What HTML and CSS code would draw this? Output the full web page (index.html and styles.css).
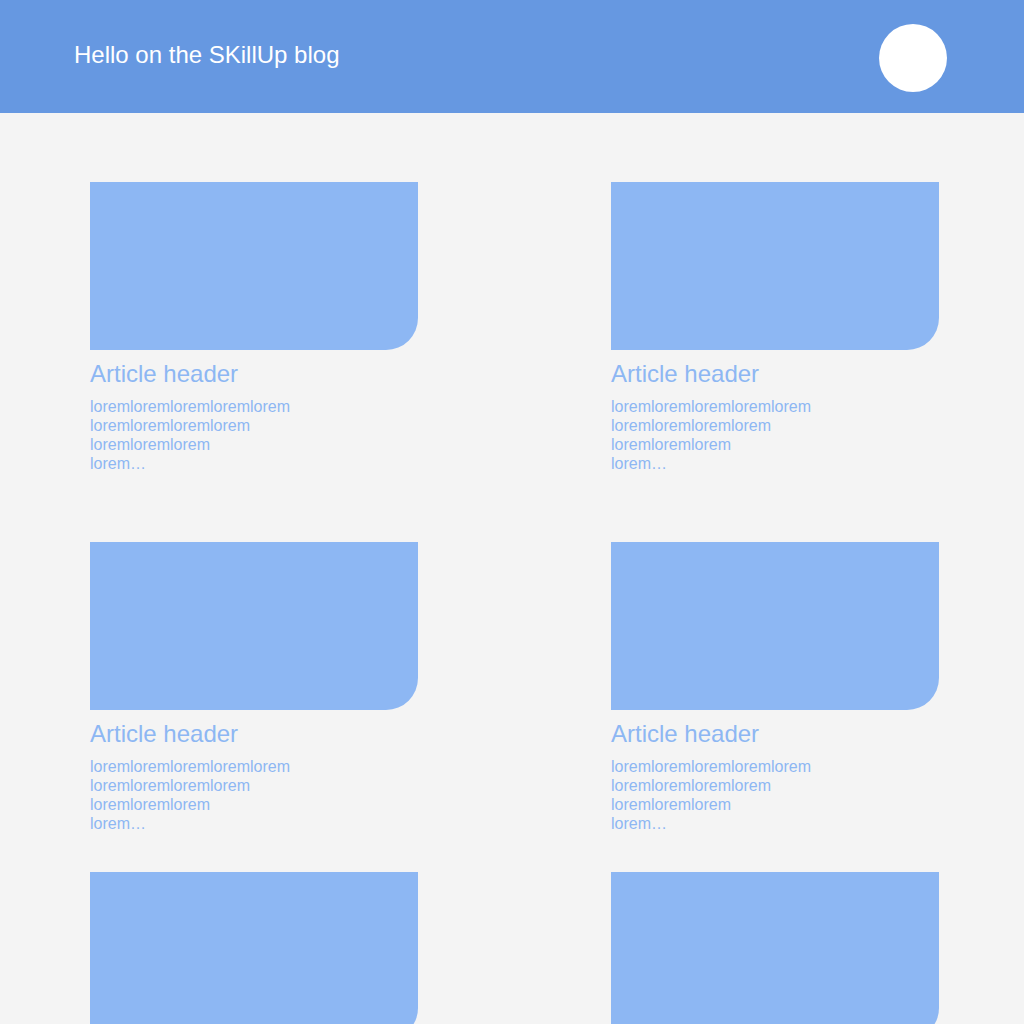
FILE: index.html
```html
<!DOCTYPE html>
<html lang="en">
<head>
<meta charset="utf-8">
<title>SKillUp blog</title>
<link rel="stylesheet" href="styles.css">
</head>
<body>
<header class="topbar">
  <h1 class="topbar-title">Hello on the SKillUp blog</h1>
  <div class="avatar"></div>
</header>
<main class="articles">
  <article class="card card-first">
    <div class="card-image"></div>
    <h2 class="card-title">Article header</h2>
    <p class="card-text">loremloremloremloremlorem<br>loremloremloremlorem<br>loremloremlorem<br>lorem…</p>
  </article>
  <article class="card card-first">
    <div class="card-image"></div>
    <h2 class="card-title">Article header</h2>
    <p class="card-text">loremloremloremloremlorem<br>loremloremloremlorem<br>loremloremlorem<br>lorem…</p>
  </article>
  <article class="card">
    <div class="card-image"></div>
    <h2 class="card-title">Article header</h2>
    <p class="card-text">loremloremloremloremlorem<br>loremloremloremlorem<br>loremloremlorem<br>lorem…</p>
  </article>
  <article class="card">
    <div class="card-image"></div>
    <h2 class="card-title">Article header</h2>
    <p class="card-text">loremloremloremloremlorem<br>loremloremloremlorem<br>loremloremlorem<br>lorem…</p>
  </article>
  <article class="card">
    <div class="card-image"></div>
    <h2 class="card-title">Article header</h2>
    <p class="card-text">loremloremloremloremlorem<br>loremloremloremlorem<br>loremloremlorem<br>lorem…</p>
  </article>
  <article class="card">
    <div class="card-image"></div>
    <h2 class="card-title">Article header</h2>
    <p class="card-text">loremloremloremloremlorem<br>loremloremloremlorem<br>loremloremlorem<br>lorem…</p>
  </article>
</main>
</body>
</html>
```
FILE: styles.css
```css
* {
  box-sizing: border-box;
}

html, body {
  margin: 0;
  padding: 0;
}

body {
  background: #f4f4f4;
  font-family: "Liberation Sans", Arial, sans-serif;
  overflow: hidden;
}

.topbar {
  height: 113px;
  background: #6698e1;
  display: flex;
  align-items: center;
  justify-content: space-between;
  padding: 4px 77px 0 74px;
}

.topbar-title {
  margin: 0 0 8px 0;
  font-size: 24px;
  font-weight: normal;
  line-height: 28px;
  color: #ffffff;
}

.avatar {
  width: 68px;
  height: 68px;
  margin-bottom: 2px;
  border-radius: 50%;
  background: #ffffff;
}

.articles {
  display: grid;
  grid-template-columns: 328px 328px;
  justify-content: space-between;
  row-gap: 39px;
  padding: 69px 85px 0 90px;
}

.card-first {
  padding-bottom: 30px;
}

.card-image {
  height: 168px;
  background: #8db7f3;
  border-bottom-right-radius: 32px;
}

.card-title {
  margin: 10px 0 0 0;
  font-size: 24px;
  font-weight: normal;
  line-height: 28px;
  color: #8db7f3;
}

.card-text {
  margin: 9px 0 0 0;
  font-size: 16px;
  line-height: 19px;
  color: #8db7f3;
}
```
